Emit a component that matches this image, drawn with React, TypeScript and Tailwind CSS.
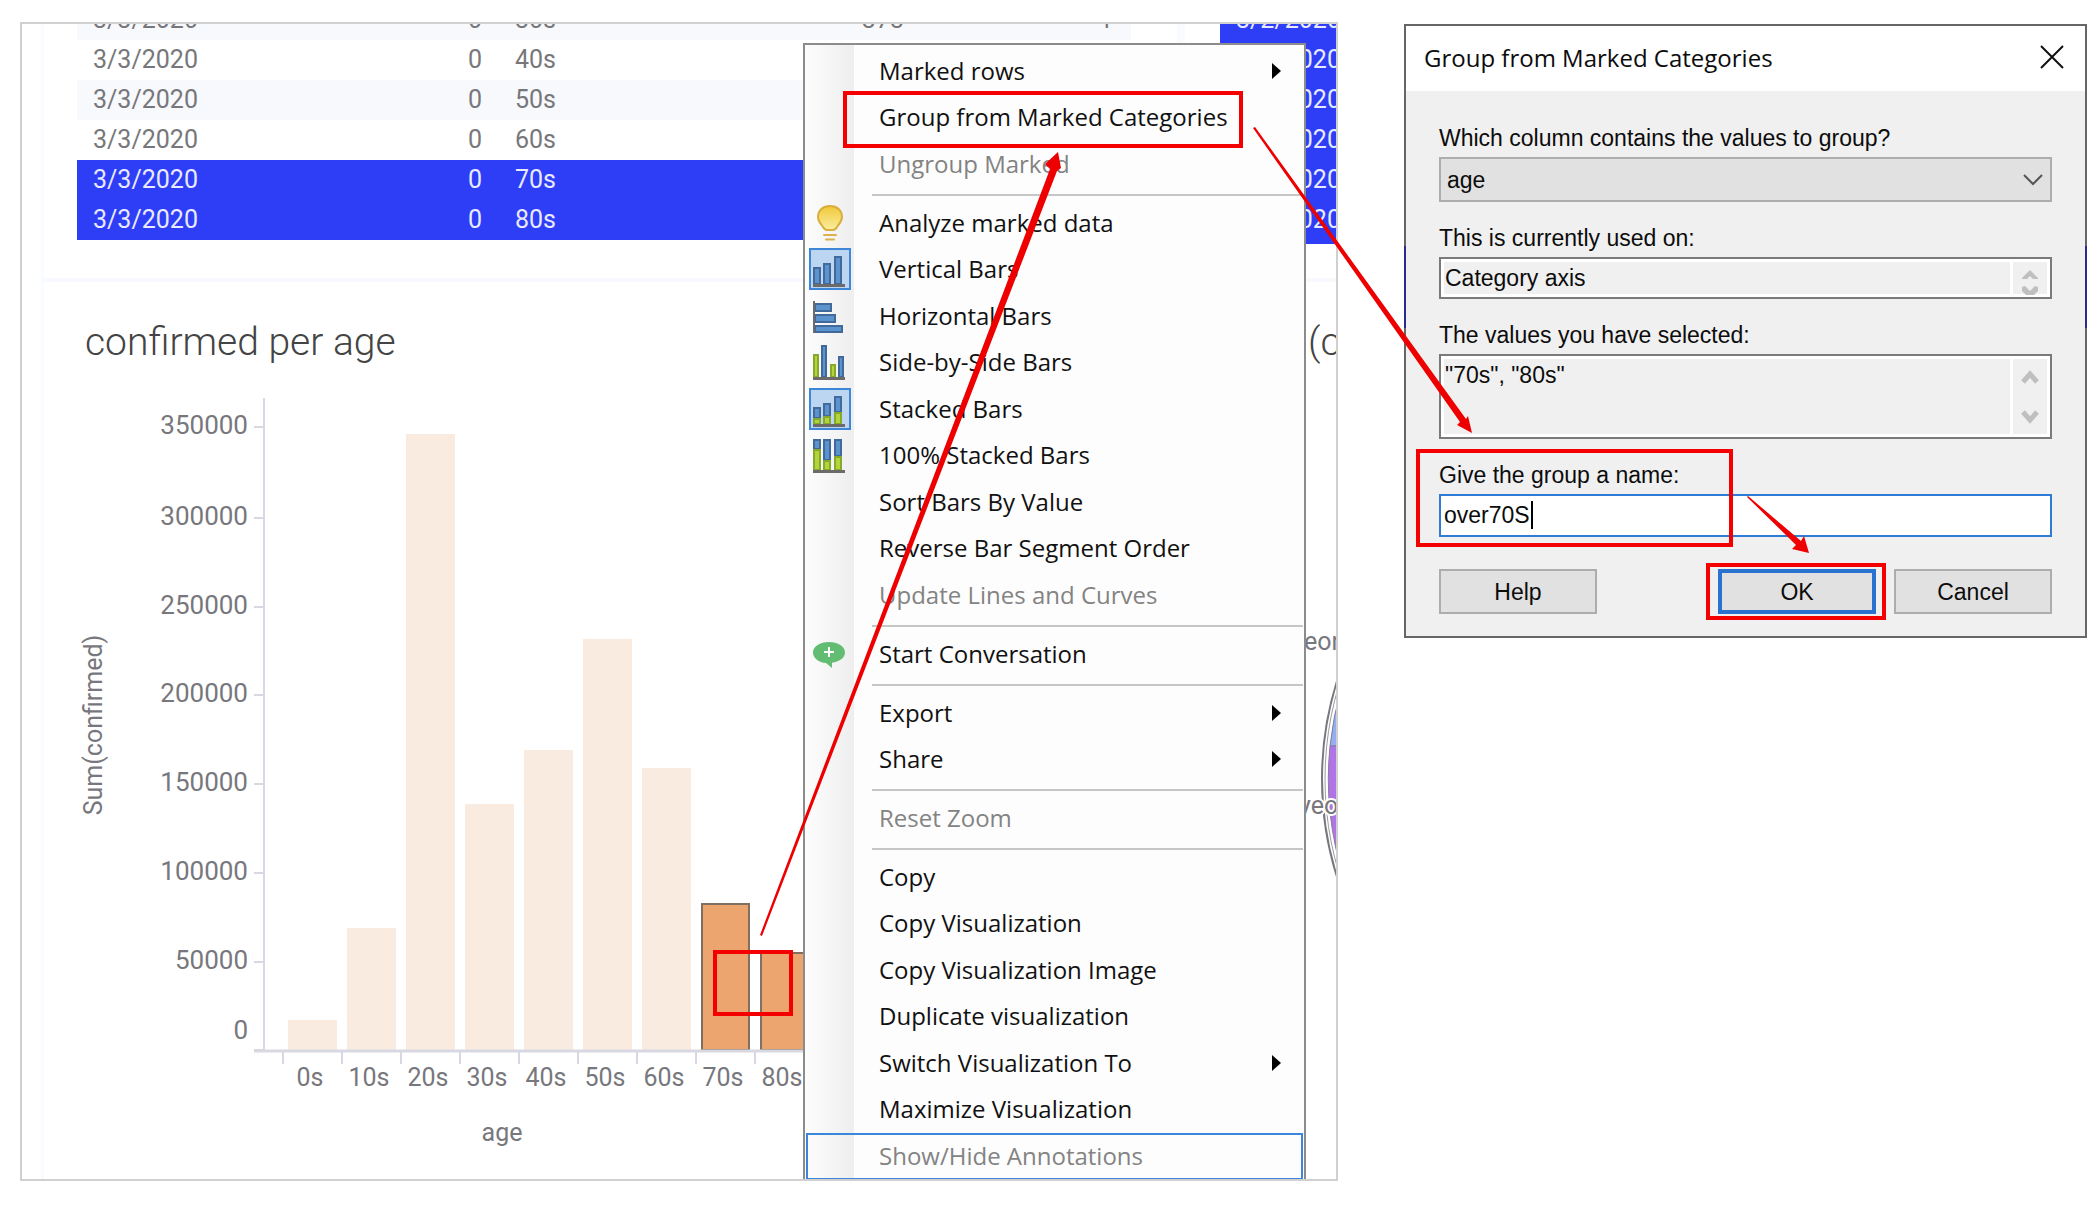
import { ReactNode } from "react";

const BLUE = "#5b93cf";
const BLUE_EDGE = "#41699a";
const GREEN = "#b2d63a";
const GREEN_EDGE = "#87a92b";
const BASE = "#6d6a6a";

type Seg = { x: number; y: number; w: number; h: number; green?: boolean };

function Segments({ items }: { items: Seg[] }) {
  return (
    <>
      {items.map((s, i) => (
        <rect
          key={i}
          x={s.x + 1}
          y={s.y + 1}
          width={s.w - 2}
          height={s.h - 2}
          fill={s.green ? GREEN : BLUE}
          stroke={s.green ? GREEN_EDGE : BLUE_EDGE}
          strokeWidth="2"
        />
      ))}
    </>
  );
}

const Baseline = () => <rect x="4" y="36" width="32" height="3" fill={BASE} />;

function Icon({ children }: { children: ReactNode }) {
  return (
    <svg className="size-[42px]" viewBox="0 0 42 42" aria-hidden="true">
      {children}
    </svg>
  );
}

const icons: Record<string, ReactNode> = {
  bulb: (
    <Icon>
      <defs>
        <linearGradient id="glass" x1="0" y1="0" x2="0" y2="1">
          <stop offset="0" stopColor="#f0c838" />
          <stop offset="1" stopColor="#fbeea0" />
        </linearGradient>
      </defs>
      <path
        d="M21 4c-7 0-12 4.500-12 11 0 4 2 6 4 8.500 1.500 2 2 4.500 5 4.500h6c3 0 3.500-2.500 5-4.500 2-2.500 4-4.500 4-8.500 0-6.500-5-11-12-11z"
        fill="url(#glass)"
        stroke="#d9ae3c"
        strokeWidth="2"
      />
      <path d="M15 33h12M17 37.500h8" stroke="#dcb04a" strokeWidth="2" strokeLinecap="round" />
    </Icon>
  ),
  vertical: (
    <Icon>
      <Segments items={[{ x: 4, y: 19, w: 8, h: 18 }, { x: 14, y: 15, w: 8, h: 22 }, { x: 25, y: 8, w: 8, h: 29 }]} />
      <Baseline />
    </Icon>
  ),
  horizontal: (
    <Icon>
      <Segments items={[{ x: 5, y: 8, w: 18, h: 9 }, { x: 5, y: 19, w: 22, h: 9 }, { x: 5, y: 30, w: 29, h: 8 }]} />
      <rect x="4" y="6" width="2" height="32" fill={BASE} />
    </Icon>
  ),
  side: (
    <Icon>
      <Segments
        items={[
          { x: 4, y: 13, w: 6, h: 24, green: true },
          { x: 12, y: 4, w: 6, h: 33 },
          { x: 21, y: 23, w: 6, h: 14, green: true },
          { x: 29, y: 15, w: 6, h: 22 },
        ]}
      />
      <Baseline />
    </Icon>
  ),
  stacked: (
    <Icon>
      <Segments
        items={[
          { x: 4, y: 19, w: 8, h: 12 },
          { x: 4, y: 30, w: 8, h: 7, green: true },
          { x: 14, y: 15, w: 8, h: 14 },
          { x: 14, y: 28, w: 8, h: 9, green: true },
          { x: 25, y: 8, w: 8, h: 17 },
          { x: 25, y: 24, w: 8, h: 13, green: true },
        ]}
      />
      <Baseline />
    </Icon>
  ),
  full: (
    <Icon>
      <Segments
        items={[
          { x: 4, y: 5, w: 8, h: 11 },
          { x: 4, y: 15, w: 8, h: 22, green: true },
          { x: 14, y: 5, w: 8, h: 22 },
          { x: 14, y: 26, w: 8, h: 11, green: true },
          { x: 25, y: 5, w: 8, h: 18 },
          { x: 25, y: 22, w: 8, h: 15, green: true },
        ]}
      />
      <Baseline />
    </Icon>
  ),
  talk: (
    <Icon>
      <path
        d="M20 9C11 9 4 13.500 4 19.500c0 6 6 10 13 10.500l6 5v-5.300c7-.9 13-4.700 13-10.200C36 13.500 29 9 20 9z"
        fill="#62bd72"
      />
      <path d="M20 14v10M15 19h10" stroke="#fff" strokeWidth="2" />
    </Icon>
  ),
};

type Item = { label: string; icon?: string; on?: boolean; off?: boolean; sub?: boolean; boxed?: boolean; hot?: boolean };

const sections: Item[][] = [
  [
    { label: "Marked rows", sub: true },
    { label: "Group from Marked Categories", boxed: true },
    { label: "Ungroup Marked", off: true },
  ],
  [
    { label: "Analyze marked data", icon: "bulb" },
    { label: "Vertical Bars", icon: "vertical", on: true },
    { label: "Horizontal Bars", icon: "horizontal" },
    { label: "Side-by-Side Bars", icon: "side" },
    { label: "Stacked Bars", icon: "stacked", on: true },
    { label: "100% Stacked Bars", icon: "full" },
    { label: "Sort Bars By Value" },
    { label: "Reverse Bar Segment Order" },
    { label: "Update Lines and Curves", off: true },
  ],
  [{ label: "Start Conversation", icon: "talk" }],
  [
    { label: "Export", sub: true },
    { label: "Share", sub: true },
  ],
  [{ label: "Reset Zoom", off: true }],
  [
    { label: "Copy" },
    { label: "Copy Visualization" },
    { label: "Copy Visualization Image" },
    { label: "Duplicate visualization" },
    { label: "Switch Visualization To", sub: true },
    { label: "Maximize Visualization" },
    { label: "Show/Hide Annotations", off: true, hot: true },
  ],
];

function MenuItem({ item }: { item: Item }) {
  return (
    <li className="relative odd:h-[47px] even:h-[46px]">
      <button
        type="button"
        disabled={item.off}
        className={
          "flex h-full w-full items-center pb-[2px] text-left text-[24px] whitespace-nowrap text-[#111] disabled:text-[#838383] " +
          (item.hot ? "shadow-[inset_0_0_0_2px_#3c87dc]" : "")
        }
      >
        <span className="w-[73px] shrink-0 pl-[3px]">
          {item.icon && (
            <span
              className={
                "block size-[42px] " + (item.on ? "bg-[#bcd6f2] shadow-[inset_0_0_0_2px_#3d86d8]" : "")
              }
            >
              {icons[item.icon]}
            </span>
          )}
        </span>
        {item.label}
        {item.sub && (
          <svg className="mr-[22px] ml-auto h-[16px] w-[9px]" viewBox="0 0 9 16" aria-hidden="true">
            <path d="M0 0l9 8-9 8z" fill="#000" />
          </svg>
        )}
      </button>
      {item.boxed && (
        <span className="pointer-events-none absolute -top-[4px] left-[37px] z-10 h-[57px] w-[400px] border-4 border-[#f40000]" />
      )}
    </li>
  );
}

function ContextMenu() {
  return (
    <nav className="absolute top-[19px] left-[781px] w-[503px] border-2 border-[#8c8c8c] bg-[#fdfdfd] bg-[linear-gradient(to_right,#fdfdfd,#eeeeee)] bg-[length:49px_100%] bg-no-repeat px-px pt-[3px] font-['Open_Sans',sans-serif]">
      {sections.map((s, i) => (
        <div key={i}>
          {i > 0 && (
            <div className="flex h-[12px] items-center pt-[2px] pl-[66px]">
              <hr className="w-full border-t-2 border-[#c6c6c6]" />
            </div>
          )}
          <ul>
            {s.map((it) => (
              <MenuItem key={it.label} item={it} />
            ))}
          </ul>
        </div>
      ))}
    </nav>
  );
}

const rows = ["30s", "40s", "50s", "60s", "70s", "80s"];

function AgeTable() {
  return (
    <table className="-mt-[24px] ml-[33px] w-[1054px] table-fixed border-collapse text-[25px] leading-[40px] text-[#77777b]">
      <colgroup>
        <col className="w-[171px]" />
        <col className="w-[252px]" />
        <col className="w-[140px]" />
        <col className="w-[278px]" />
        <col />
      </colgroup>
      <tbody>
        {rows.map((age, i) => (
          <tr key={age} className={i > 3 ? "bg-[#2d3ef6] text-[#e9eaff]" : i % 2 === 0 ? "bg-[#f8f9fd]" : ""}>
            <td className="h-[40px] p-0 pl-[16px]">3/3/2020</td>
            <td className="p-0 pr-[18px] text-right">0</td>
            <td className="p-0 pl-[15px]">{age}</td>
            <td className="p-0 pr-[14px] text-right">{i === 0 ? "373" : ""}</td>
            <td className="p-0 pr-[18px] text-right">{i === 0 ? "1" : ""}</td>
          </tr>
        ))}
      </tbody>
    </table>
  );
}

const ticks: [string, number, number][] = [
  ["350000", 427, 434],
  ["300000", 518, 525],
  ["250000", 607, 614],
  ["200000", 695, 702],
  ["150000", 784, 791],
  ["100000", 873, 880],
  ["50000", 962, 969],
  ["0", 1050, 1039],
];

const bars: [string, number][] = [
  ["0s", 1020],
  ["10s", 928],
  ["20s", 434],
  ["30s", 804],
  ["40s", 750],
  ["50s", 639],
  ["60s", 768],
  ["70s", 904],
  ["80s", 953],
];

function BarChart() {
  return (
    <svg className="block h-[813px] w-full font-['Roboto',sans-serif] text-[25px]" fill="#77777d" role="img" aria-label="confirmed per age">
      <g transform="translate(-44 -366)">
        <path d="M264 398V1050" stroke="#d7d8e2" strokeWidth="2" />
        {ticks.map(([t, y, ty]) => (
          <g key={t}>
            <path d={`M254 ${y}H264`} stroke="#d7d8e2" strokeWidth="2" />
            <text x="248" y={ty} textAnchor="end" className="text-[26px]">
              {t}
            </text>
          </g>
        ))}
        {bars.map(([t, top], i) => {
          const x = 288 + i * 59;
          const marked = i > 6;
          return (
            <g key={t}>
              <rect
                x={marked ? x + 1 : x}
                y={top}
                width={marked ? 47 : 49}
                height={1050 - top}
                fill={marked ? "#eca56e" : "#faebe0"}
                stroke={marked ? "#80705f" : "none"}
                strokeWidth="2"
              />
              <path d={`M${x - 5} 1050v14`} stroke="#d7d8e2" strokeWidth="2" />
              <text x={x + 22} y="1086" textAnchor="middle">
                {t}
              </text>
            </g>
          );
        })}
        <path d="M254 1051H1170" stroke="#d7d8e2" strokeWidth="3" />
        <text x="502" y="1141" textAnchor="middle">
          age
        </text>
        <text transform="translate(102 725) rotate(-90)" textAnchor="middle">
          Sum(confirmed)
        </text>
        <rect x="715" y="952" width="76" height="62" fill="none" stroke="#f40000" strokeWidth="4" />
      </g>
    </svg>
  );
}

function PieChart() {
  return (
    <svg className="block h-[813px] w-full font-['Roboto',sans-serif] text-[25px]" fill="#77777d" role="img" aria-label="confirmed by region">
      <g transform="translate(-1185 -366)">
        <circle cx="1649" cy="779" r="327" fill="#fff" stroke="#77787e" strokeWidth="2" />
        <circle cx="1649" cy="779" r="324" fill="none" stroke="#9a9ba0" strokeWidth="1" />
        <path d="M1330 746A321 321 0 0 1 1649 458V746z" fill="#94aef3" stroke="#7d7e9a" strokeWidth="1" />
        <path d="M1330 746H1649V1100A321 321 0 0 1 1330 746z" fill="#b074e6" stroke="#8c7a9e" strokeWidth="1" />
        <text x="1304" y="650">
          eon
        </text>
        <text x="1299" y="814" stroke="#fff" strokeWidth="4" paintOrder="stroke">
          yeo
        </text>
      </g>
    </svg>
  );
}

function Dashboard() {
  return (
    <section className="relative flex min-w-0 flex-1 overflow-hidden border-2 border-[#d0d0d0] bg-white font-['Roboto',sans-serif]">
      <div className="w-[22px] shrink-0 border-r-[3px] border-[#f8fbff]" />
      <div className="min-w-0 flex-1">
        <div className="h-[254px] overflow-hidden">
          <AgeTable />
        </div>
        <div className="h-[4px] bg-[#f8f9fe]" />
        <h2 className="pt-[37px] pb-px pl-[41px] text-[39px] leading-[46px] font-light text-[#444]">confirmed per age</h2>
        <BarChart />
      </div>
      <div className="w-[159px] shrink-0 overflow-hidden border-l-[8px] border-[#fafbfe] whitespace-nowrap">
        <div className="h-[254px] overflow-hidden pl-[35px]">
          <ul className="-mt-[24px] bg-[#2d3ef6] pb-[4px] pl-[16px] text-[25px] leading-[40px] text-[#e9eaff]">
            {rows.map((r) => (
              <li key={r}>3/2/2020</li>
            ))}
          </ul>
        </div>
        <div className="h-[4px] bg-[#f8f9fe]" />
        <h2 className="pt-[37px] pb-px pl-[123px] text-[39px] leading-[46px] font-light text-[#444]">(confirmed)</h2>
        <PieChart />
      </div>
      <ContextMenu />
    </section>
  );
}

function ScrollArrows({ small }: { small?: boolean }) {
  return (
    <span className="flex w-[37px] shrink-0 items-center justify-center border-l-[3px] border-white bg-[#f0f0f0]">
      {small ? (
        <svg className="h-[34px] w-[18px]" viewBox="0 0 18 34" fill="#bfbfbf" aria-hidden="true">
          <path d="M9 9l8 8v1h-5l-3-3-3 3H1v-1z" />
          <path d="M1 26l3-1 5 5 5-5 3 1v4l-4 4H5l-4-4z" />
        </svg>
      ) : (
        <svg className="h-[56px] w-[18px]" viewBox="0 0 18 56" fill="none" stroke="#bfbfbf" strokeWidth="5" aria-hidden="true">
          <path d="M2 13l7-8 7 8" />
          <path d="M2 43l7 8 7-8" />
        </svg>
      )}
    </span>
  );
}

function GroupDialog() {
  const label = "block leading-[28px]";
  const box = "flex border-2 border-[#7a7a7a] bg-white p-[3px]";
  const area = "min-w-0 flex-1 resize-none overflow-hidden bg-[#f0f0f0] px-px pt-[2px] leading-[28px] outline-none";
  const button = "relative h-[45px] w-[158px] bg-[#e1e1e1]";
  return (
    <section className="relative mt-[2px] w-[683px] shrink-0 border-2 border-[#666] bg-[#f0f0f0] text-[#0c0c0c]">
      <span className="absolute top-[220px] -left-[2px] h-[82px] w-[2px] bg-[#2b2b8e]" />
      <span className="absolute top-[220px] -right-[2px] h-[82px] w-[2px] bg-[#2b2b8e]" />
      <header className="flex h-[65px] items-center justify-between bg-white pr-[21px] pb-[2px] pl-[18px]">
        <h1 className="font-['Open_Sans',sans-serif] text-[24px]">Group from Marked Categories</h1>
        <button type="button" aria-label="Close" className="mb-[2px]">
          <svg className="size-[24px]" viewBox="0 0 24 24" aria-hidden="true">
            <path d="M1 1l22 22M23 1L1 23" stroke="#111" strokeWidth="2" />
          </svg>
        </button>
      </header>
      <form
        className="flex flex-col gap-[22px] px-[33px] pt-[33px] pb-[22px] font-['Liberation_Sans',sans-serif] text-[23px]"
        onSubmit={(e) => e.preventDefault()}
      >
        <div className="flex flex-col gap-[5px]">
          <label htmlFor="column" className={label}>
            Which column contains the values to group?
          </label>
          <div className="grid items-center">
            <select
              id="column"
              className="col-start-1 row-start-1 h-[45px] appearance-none border-2 border-[#adadad] bg-[#e1e1e1] pt-[2px] pl-[6px]"
            >
              <option>age</option>
            </select>
            <svg className="pointer-events-none col-start-1 row-start-1 mr-[9px] h-[12px] w-[20px] justify-self-end" viewBox="0 0 20 12" aria-hidden="true">
              <path d="M1 1l9 9 9-9" fill="none" stroke="#555" strokeWidth="2" />
            </svg>
          </div>
        </div>
        <div className="flex flex-col gap-[5px]">
          <label htmlFor="used" className={label}>
            This is currently used on:
          </label>
          <div className={box + " h-[42px]"}>
            <textarea id="used" readOnly rows={1} className={area} defaultValue="Category axis" />
            <ScrollArrows small />
          </div>
        </div>
        <div className="flex flex-col gap-[5px]">
          <label htmlFor="values" className={label}>
            The values you have selected:
          </label>
          <div className={box + " h-[85px]"}>
            <textarea id="values" readOnly rows={2} className={area} defaultValue={'"70s", "80s"'} />
            <ScrollArrows />
          </div>
        </div>
        <div className="relative flex flex-col gap-[5px]">
          <label htmlFor="name" className={label}>
            Give the group a name:
          </label>
          <div className="relative">
            <input
              id="name"
              type="text"
              defaultValue="over70S"
              className="block h-[43px] w-full border-2 border-[#2f7cd6] bg-white px-[3px] outline-none"
            />
            <span className="absolute top-[7px] left-[92px] h-[28px] w-[2px] bg-black" />
          </div>
          <span className="pointer-events-none absolute -top-[12px] -left-[23px] h-[98px] w-[317px] border-4 border-[#f40000]" />
        </div>
        <div className="mt-[10px] flex gap-[18px]">
          <button type="button" className={button + " mr-auto border-2 border-[#adadad] pt-[2px]"}>
            Help
          </button>
          <button type="submit" className={button + " border-4 border-[#2a72d0] pt-[2px]"}>
            OK
            <span className="pointer-events-none absolute -top-[10px] -right-[14px] -bottom-[10px] -left-[16px] border-4 border-[#f40000]" />
          </button>
          <button type="button" className={button + " border-2 border-[#adadad] pt-[2px]"}>
            Cancel
          </button>
        </div>
      </form>
    </section>
  );
}

function Arrows() {
  return (
    <svg className="pointer-events-none absolute inset-0 z-20 h-full w-full" fill="#ee0000" aria-hidden="true">
      <path d="M760 935L1050 169L1045 164L1058 152L1061 168L1057 171L762 936Z" />
      <path d="M1255 127L1466 419L1468 416L1472 433L1457 425L1460 422L1253 128Z" />
      <path d="M1748 496L1801 541L1804 536L1809 553L1792 549L1796 545L1747 497Z" />
    </svg>
  );
}

export default function App() {
  return (
    <main className="relative flex min-h-screen items-start gap-[66px] bg-white pt-[22px] pr-[11px] pl-[20px]">
      <Dashboard />
      <GroupDialog />
      <Arrows />
    </main>
  );
}
